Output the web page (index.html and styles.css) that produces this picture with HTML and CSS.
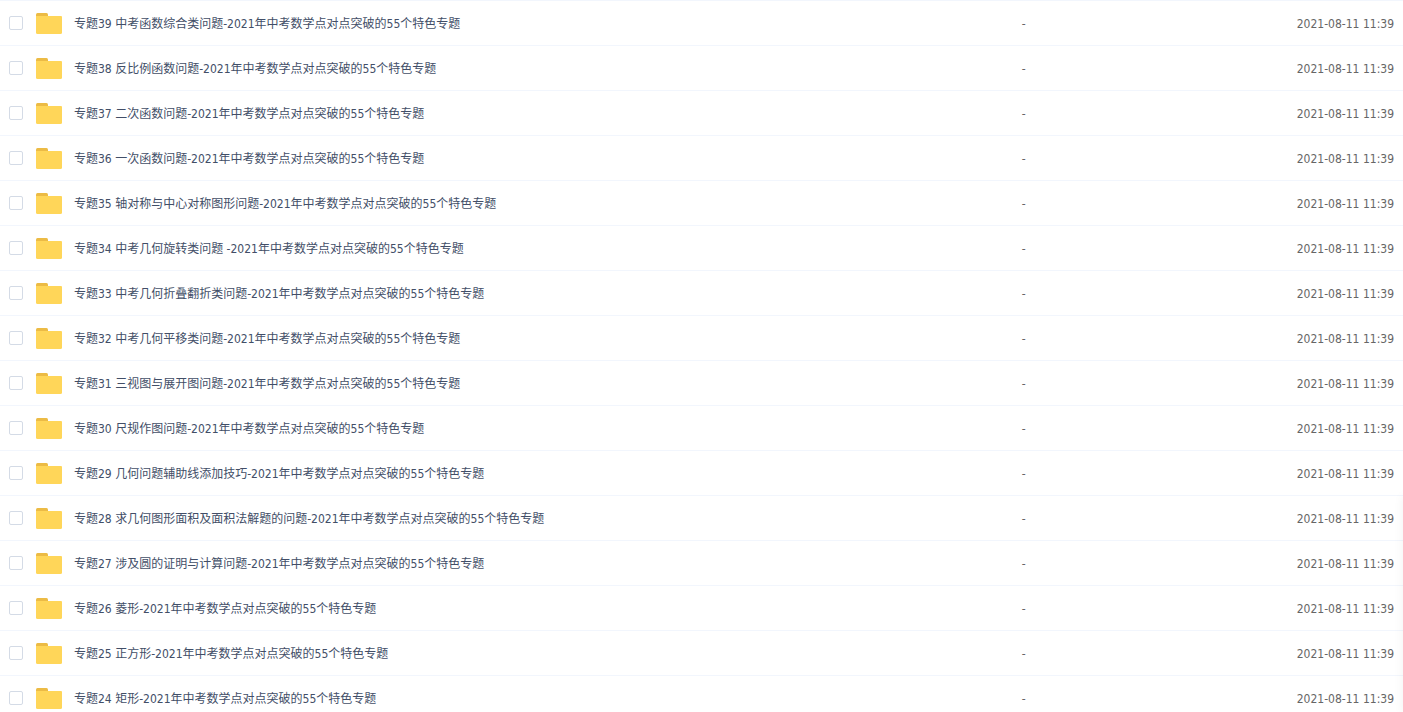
FILE: index.html
```html
<!DOCTYPE html>
<html lang="zh-CN">
<head>
    <meta charset="UTF-8">
    <meta name="viewport" content="width=device-width, initial-scale=1.0">
    <title>专题</title>
    <link rel="stylesheet" href="styles.css">
</head>
<body>
    <!-- Folder icon, shared by all rows -->
    <svg class="sprite" aria-hidden="true">
        <symbol id="folder" viewBox="0 0 26 21">
            <path fill="#ecbb45" d="M0 5V1.500Q0 0 1.500 0H10.500Q12 0 12 1.500V5Z"/>
            <path fill="#ffd659" d="M0 3H25Q26 3 26 4V19.500Q26 21 24.500 21H1.500Q0 21 0 19.500Z"/>
        </symbol>
    </svg>

    <main class="file-list">
        <table class="file-table">
            <colgroup>
                <col class="col-check">
                <col class="col-name">
                <col class="col-size">
                <col class="col-date">
            </colgroup>
            <tbody id="files"></tbody>
        </table>
    </main>
    <div class="side-panel"></div>

    <script src="script.js"></script>
</body>
</html>
```

FILE: styles.css
```css
* {
    box-sizing: border-box;
}
body {
    margin: 0;
    background: #fff;
    color: #424e67;
    font-family: "DejaVu Sans Condensed", "Noto Sans CJK SC", sans-serif;
    font-size: 12px;
    line-height: 20px;
}
.sprite {
    display: none;
}
.file-list {
    height: 100vh;
    overflow-y: auto;
    scrollbar-width: none;
    border-top: 1px solid #f2f6fd;
}
.file-table {
    width: 100%;
    table-layout: fixed;
    border-collapse: separate;
    border-spacing: 0;
}
.col-check {
    width: 36px;
}
.col-size {
    width: 13%;
}
.col-date {
    width: 199px;
}
.file-table td {
    height: 45px;
    padding: 0;
    border-bottom: 1px solid #f2f6fd;
    white-space: nowrap;
}
.file-table tr:hover td {
    background: #f7f9fc;
}
.check {
    display: block;
    appearance: none;
    width: 14px;
    height: 14px;
    margin: 0 0 0 9px;
    border: 1px solid #d4dbe6;
    border-radius: 2px;
    background: #fff;
}
.check:checked {
    background: #06a7ff;
    border-color: #06a7ff;
}
.name {
    display: flex;
    align-items: center;
    gap: 12px;
    cursor: pointer;
}
.name span {
    padding-top: 2px;
}
.folder {
    flex: none;
    width: 26px;
    height: 21px;
}
.file-table .size,
.file-table .date {
    padding-top: 2px;
    color: #666;
}
.file-table .date {
    padding-right: 9px;
    text-align: right;
}
/* docked off the right edge, only its shadow shows */
.side-panel {
    position: fixed;
    top: 496px;
    bottom: 0;
    left: 100%;
    width: 60px;
    box-shadow: 0 0 10px rgba(0, 0, 0, 0.06);
}
```

FILE: script.js
```javascript
const suffix = "-2021年中考数学点对点突破的55个特色专题";
const files = [
    "专题39 中考函数综合类问题",
    "专题38 反比例函数问题",
    "专题37 二次函数问题",
    "专题36 一次函数问题",
    "专题35 轴对称与中心对称图形问题",
    "专题34 中考几何旋转类问题 ",
    "专题33 中考几何折叠翻折类问题",
    "专题32 中考几何平移类问题",
    "专题31 三视图与展开图问题",
    "专题30 尺规作图问题",
    "专题29 几何问题辅助线添加技巧",
    "专题28 求几何图形面积及面积法解题的问题",
    "专题27 涉及圆的证明与计算问题",
    "专题26 菱形",
    "专题25 正方形",
    "专题24 矩形"
];

document.getElementById("files").innerHTML = files.map((file, i) => `
    <tr>
        <td><input type="checkbox" class="check" id="file${i}"></td>
        <td>
            <label class="name" for="file${i}">
                <svg class="folder" aria-hidden="true"><use href="#folder"/></svg>
                <span>${file}${suffix}</span>
            </label>
        </td>
        <td class="size">-</td>
        <td class="date">2021-08-11 11:39</td>
    </tr>`).join("");
```
